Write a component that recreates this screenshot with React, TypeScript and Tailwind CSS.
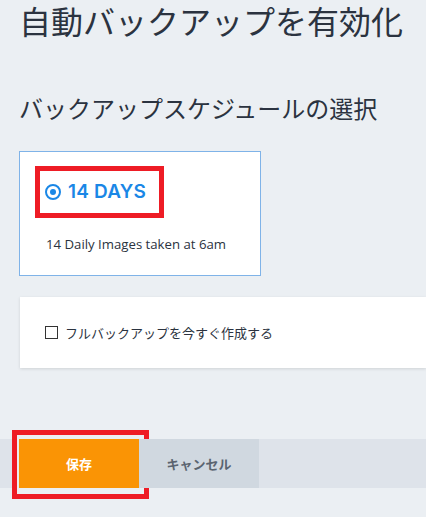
export default function App() {
  const jp = { fontFamily: '"Noto Sans CJK JP", "Noto Sans", sans-serif' };

  return (
    <div className="min-h-[517px] w-[426px] overflow-hidden bg-[#ebeff3]" style={jp}>
      <h1 className="pl-[19px] pt-[3px] text-[32px] leading-[34px] font-normal text-[#2b3340]">
        自動バックアップを有効化
      </h1>

      <h2 className="mt-[55px] pl-[19px] text-[24px] leading-[32px] font-normal text-[#2b3340]">
        バックアップスケジュールの選択
      </h2>

      <div className="ml-[19px] mt-[27px] h-[125px] w-[242px] border border-[#7fb3e8] bg-white pl-[15px] pt-[14px]">
        <div className="flex h-[52px] w-[129px] items-center gap-[7px] border-[5px] border-[#ee1c25] pl-[5px]">
          <span className="flex h-[16px] w-[16px] items-center justify-center rounded-full border-[2px] border-[#1a87e6]">
            <span className="h-[6px] w-[6px] rounded-full bg-[#1a87e6]" />
          </span>
          <span
            className="text-[19px] font-semibold tracking-[0.2px] text-[#1a87e6]"
            style={{ fontFamily: 'Inter, "Noto Sans", sans-serif' }}
          >
            14 DAYS
          </span>
        </div>
        <p
          className="mt-[17px] pl-[11px] text-[13.2px] leading-[18px] text-[#2b3340]"
          style={{ fontFamily: '"Open Sans", "Noto Sans", sans-serif' }}
        >
          14 Daily Images taken at 6am
        </p>
      </div>

      <div className="ml-[20px] mt-[21px] flex h-[71px] items-center bg-white pl-[25px] shadow-[0_1px_3px_rgba(0,0,0,0.12)]">
        <span className="h-[13px] w-[13px] border border-[#333]" />
        <span className="ml-[7px] text-[13px] leading-[18px] text-[#2b3340]">
          フルバックアップを今すぐ作成する
        </span>
      </div>

      <div className="mt-[71px] flex h-[49px] bg-[#dee3ea]">
        <div className="ml-[12px] -mt-[9px] flex h-[69px] w-[137px] shrink-0 items-start border-[5px] border-[#ee1c25] bg-[#ebeff3] pl-[2px] pt-[4px]">
          <button className="h-[49px] w-[120px] bg-[#fa9405] text-[13px] font-bold text-white">
            保存
          </button>
        </div>
        <button className="-ml-[10px] h-[49px] w-[120px] bg-[#d0d8e0] text-[13px] font-bold text-[#5a6470]">
          キャンセル
        </button>
      </div>
    </div>
  );
}
